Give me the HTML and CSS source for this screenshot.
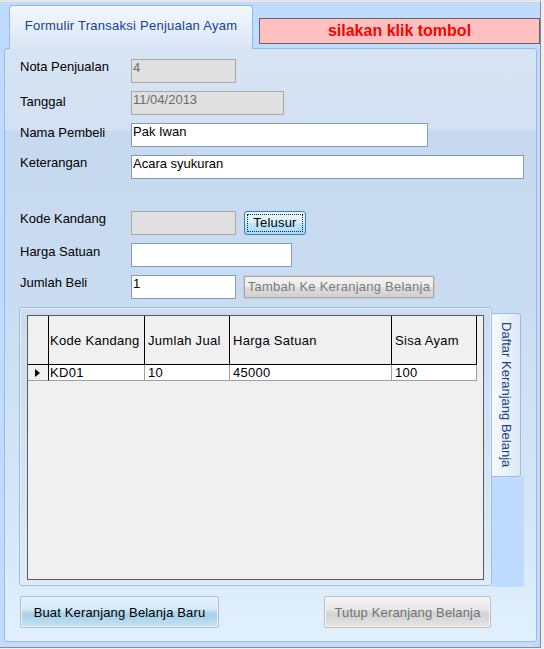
FILE: index.html
```html
<!DOCTYPE html>
<html>
<head>
<meta charset="utf-8">
<link rel="stylesheet" href="styles.css">
</head>
<body>
<div class="window">
  <div class="tabstrip">
    <div class="tab-active">Formulir Transaksi Penjualan Ayam</div>
    <div class="notice">silakan klik tombol</div>
  </div>
  <div class="panel">
    <div class="form">
      <div class="row"><span class="lbl">Nota Penjualan</span><div class="box dis w105">4</div></div>
      <div class="row"><span class="lbl p3">Tanggal</span><div class="box dis w153">11/04/2013</div></div>
      <div class="row"><span class="lbl p2">Nama Pembeli</span><div class="box w297">Pak Iwan</div></div>
      <div class="row"><span class="lbl">Keterangan</span><div class="box w393">Acara syukuran</div></div>
      <div class="row gapbig"><span class="lbl">Kode Kandang</span><div class="box dis w105"></div><button class="btn-telusur"><span class="focus">Telusur</span></button></div>
      <div class="row"><span class="lbl p1">Harga Satuan</span><div class="box w161"></div></div>
      <div class="row"><span class="lbl">Jumlah Beli</span><div class="box w105">1</div><button class="btn-tambah">Tambah Ke Keranjang Belanja</button></div>
    </div>
    <div class="cart">
      <div class="page">
        <div class="grid">
          <div class="ghead">
            <div class="rh"></div>
            <div class="c c1">Kode Kandang</div>
            <div class="c c2">Jumlah Jual</div>
            <div class="c c3">Harga Satuan</div>
            <div class="c c4">Sisa Ayam</div>
          </div>
          <div class="grow">
            <div class="rh"><span class="arrow"></span></div>
            <div class="c c1">KD01</div>
            <div class="c c2">10</div>
            <div class="c c3">45000</div>
            <div class="c c4">100</div>
          </div>
        </div>
      </div>
      <div class="vstrip">
        <div class="vtab"><span class="vtext">Daftar Keranjang Belanja</span></div>
        <div class="vfill"></div>
      </div>
    </div>
    <div class="actions">
      <button class="btn btn-blue">Buat Keranjang Belanja Baru</button>
      <button class="btn btn-gray">Tutup Keranjang Belanja</button>
    </div>
  </div>
</div>
</body>
</html>
```

FILE: styles.css
```css
* { box-sizing: border-box; }
body {
  margin: 0;
  width: 544px;
  height: 649px;
  overflow: hidden;
  background: #eeeeee;
  font-family: "Liberation Sans", Arial, sans-serif;
  font-size: 13px;
  color: #000;
}
.window {
  width: 541px;
  height: 648px;
  border-top: 2px solid #e6e6e6;
  border-right: 1px solid #8c8c8c;
  border-bottom: 1px solid #8c8c8c;
  background: #bfdbff;
}
.tabstrip {
  display: flex;
  align-items: flex-start;
  height: 46px;
  padding-left: 9px;
}
.tab-active {
  position: relative;
  z-index: 1;
  margin-top: 3px;
  width: 244px;
  height: 44px;
  border: 1px solid #97b7e2;
  border-bottom: none;
  border-radius: 3px 3px 0 0;
  background: linear-gradient(to bottom, #f4f8fe 0%, #e6eefa 50%, #d9e5f5 100%);
  color: #15428b;
  text-align: center;
  line-height: 15px;
  padding-top: 12px;
  letter-spacing: 0.25px;
}
.notice {
  margin-left: 6px;
  margin-top: 16px;
  width: 281px;
  height: 26px;
  border: 1px solid #646464;
  background: #ffc0c0;
  color: #ff0000;
  font-weight: bold;
  font-size: 16px;
  line-height: 24px;
  text-align: center;
}
.panel {
  margin-left: 4px;
  width: 533px;
  height: 594px;
  border: 1px solid #9bb9e2;
  border-radius: 3px;
  background: linear-gradient(to bottom, #d7e4f4 0px, #d3e0f1 81px, #c7d9ef 82px, #cadcf1 250px, #d6e7f8 480px, #e1f0fc 593px);
  padding-left: 15px;
  padding-top: 10px;
}
.form {
  display: flex;
  flex-direction: column;
  gap: 8px;
}
.row {
  display: flex;
  align-items: flex-start;
  height: 24px;
}
.row.gapbig { margin-top: 24px; }
.lbl {
  width: 111px;
  line-height: 15px;
  white-space: nowrap;
}
.lbl.p1 { padding-top: 1px; }
.lbl.p2 { padding-top: 2px; }
.lbl.p3 { padding-top: 3px; }
.box {
  height: 24px;
  border: 1px solid #7f9db9;
  background: #fff;
  padding: 0 1px;
  line-height: 16px;
  white-space: nowrap;
}
.box.dis {
  background: #e0e0e0;
  border-color: #a8a8a8;
  color: #6d6d6d;
}
.w105 { width: 105px; }
.w153 { width: 153px; }
.w161 { width: 161px; }
.w297 { width: 297px; }
.w393 { width: 393px; }
.btn-telusur {
  margin-left: 8px;
  width: 62px;
  height: 24px;
  padding: 2px;
  border: 1px solid #3c7fb1;
  border-radius: 3px;
  background: linear-gradient(to bottom, #e9f6fd 0%, #d9f0fc 48%, #bee6fd 52%, #a7d9f5 100%);
  font-family: inherit;
  font-size: 13px;
  color: #000;
  display: flex;
  letter-spacing: 0.2px;
}
.focus {
  flex: 1;
  border: 1px dotted #222;
  line-height: 16px;
  text-align: center;
}
.btn-tambah {
  margin-left: 7px;
  width: 192px;
  height: 24px;
  padding: 0;
  border: 1px solid #c8c8c8;
  box-shadow: inset 0 0 0 1px #a9a9a9;
  border-radius: 2px;
  background: linear-gradient(to bottom, #f2f2f2 0%, #ebebeb 48%, #dddddd 52%, #cfcfcf 100%);
  font-family: inherit;
  font-size: 13px;
  color: #7b7b7b;
  line-height: 20px;
  white-space: nowrap;
  letter-spacing: 0.25px;
}
.cart {
  display: flex;
  margin-top: 8px;
  margin-left: -1px;
  height: 280px;
}
.page {
  width: 473px;
  height: 279px;
  border: 1px solid #9dbce4;
  border-radius: 3px;
  box-shadow: inset 0 0 0 1px #e6f0fb;
  padding: 7px;
}
.grid {
  width: 457px;
  height: 265px;
  border: 1px solid #5a5a5a;
  background: #f0f0f0;
  letter-spacing: 0.3px;
}
.ghead, .grow {
  display: flex;
}
.ghead {
  height: 49px;
}
.ghead .rh, .ghead .c {
  height: 49px;
  border-right: 1px solid #000;
  border-bottom: 1px solid #000;
  background: #f0f0f0;
  display: flex;
  align-items: center;
  white-space: nowrap;
}
.grow {
  height: 16px;
}
.grow .rh {
  height: 16px;
  border-right: 1px solid #000;
  border-bottom: 1px solid #a0a0a0;
  background: #f0f0f0;
  display: flex;
  align-items: center;
  justify-content: center;
}
.grow .c {
  height: 16px;
  border-right: 1px solid #a0a0a0;
  border-bottom: 1px solid #a0a0a0;
  background: #fff;
  line-height: 15px;
  white-space: nowrap;
}
.rh { width: 21px; }
.c { padding-left: 3px; overflow: hidden; }
.c1 { width: 96px; padding-left: 1px; }
.c2 { width: 85px; }
.c3 { width: 162px; }
.c4 { width: 85px; }
.arrow {
  width: 0;
  height: 0;
  border-left: 5px solid #000;
  border-top: 4.5px solid transparent;
  border-bottom: 4.5px solid transparent;
  margin-left: -1px;
}
.vstrip {
  width: 32px;
  margin-top: 6px;
  display: flex;
  flex-direction: column;
}
.vtab {
  width: 29px;
  height: 164px;
  border: 1px solid #9dbce4;
  border-left: none;
  border-radius: 0 3px 3px 0;
  background: linear-gradient(to right, #f6f9fe 0%, #e9f0fa 60%, #dde8f6 100%);
  display: flex;
  justify-content: center;
  padding-top: 8px;
}
.vtext {
  writing-mode: vertical-rl;
  color: #15428b;
  line-height: 15px;
  white-space: nowrap;
}
.vfill {
  flex: 1;
  background: #bfdbff;
}
.actions {
  display: flex;
  margin-top: 9px;
}
.btn {
  height: 32px;
  padding: 0;
  font-family: inherit;
  font-size: 13px;
  border-radius: 2px;
  white-space: nowrap;
  letter-spacing: 0.15px;
}
.btn-blue {
  width: 199px;
  border: 1px solid #a9bfd6;
  box-shadow: inset 0 0 0 1px #e8f3fb;
  background: linear-gradient(to bottom, #e3f1fb 0%, #d4eaf8 40%, #b7d9ee 50%, #a8d0e8 60%, #c6e2f3 100%);
  color: #000;
}
.btn-gray {
  margin-left: 105px;
  width: 167px;
  border: 1px solid #bdbdbd;
  box-shadow: inset 0 0 0 1px #f4f4f4;
  background: linear-gradient(to bottom, #f3f3f3 0%, #e9e9e9 40%, #d9d9d9 50%, #d3d3d3 60%, #e6e6e6 100%);
  color: #737373;
}
```
